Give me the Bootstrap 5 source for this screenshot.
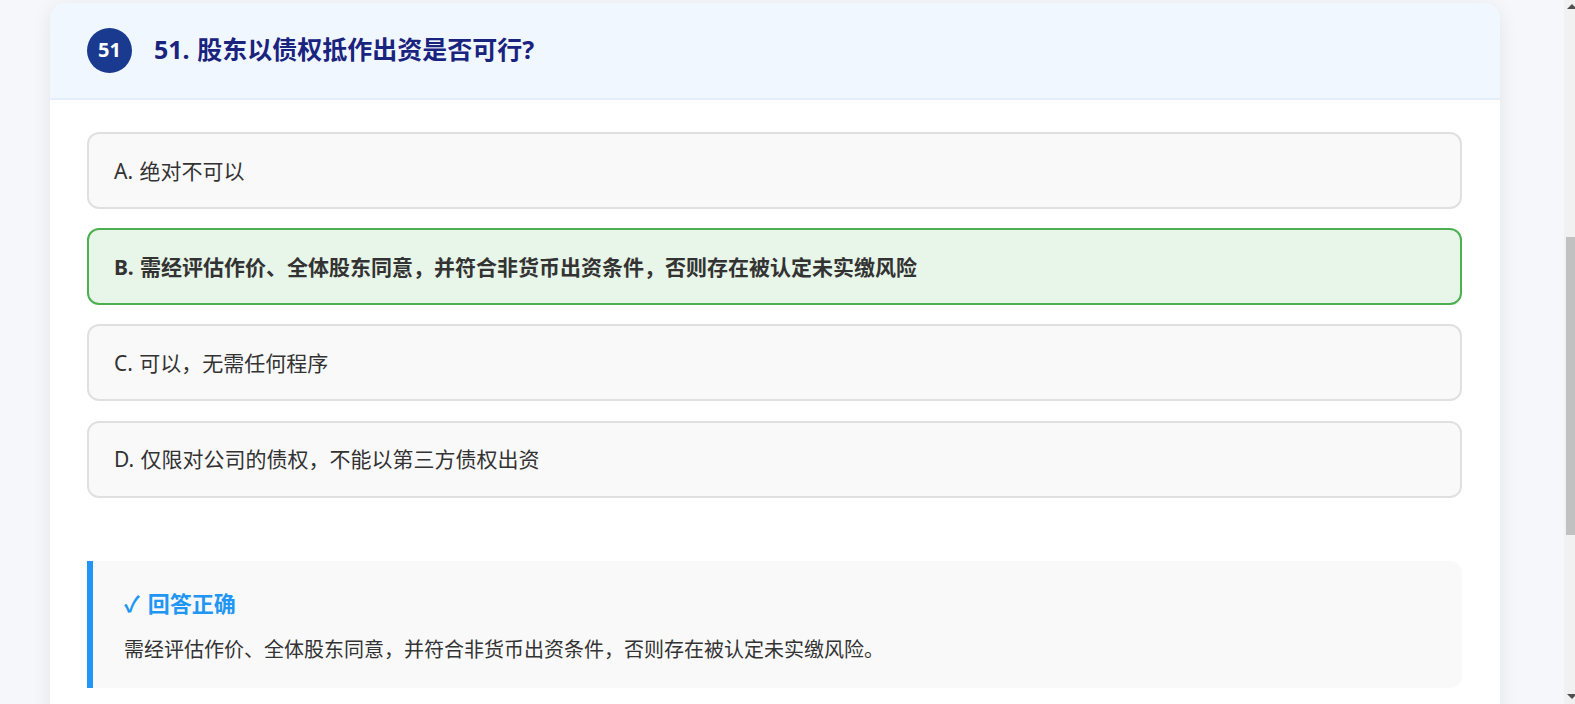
<!DOCTYPE html>
<html lang="zh-CN">
<head>
<meta charset="utf-8">
<title>题目 51</title>
<link href="https://cdn.jsdelivr.net/npm/bootstrap@5.3.0/dist/css/bootstrap.min.css" rel="stylesheet">
<style>
html,body{height:704px;overflow:hidden}
body{background:#f5f7fb;font-family:"Noto Sans","Noto Sans CJK SC",sans-serif;color:#333}
.page-frame{height:704px;overflow:hidden}
.page-main{width:1564px;padding:3px 64px 0 50px;flex:none}
.quiz-box{background:#fff;border-radius:16px 16px 0 0;box-shadow:0 4px 20px rgba(0,0,0,.08);overflow:hidden;height:760px}
.quiz-head{height:97px;background:#f0f7ff;border-bottom:2px solid #e3edfb;padding:0 38px 0 37px;gap:22px}
.num-dot{width:45px;height:45px;background:#1a3a8f;color:#fff;font-size:20px;font-weight:700;margin-top:-1px}
.quiz-title{font-size:25px;font-weight:700;color:#1a237e;line-height:1.2;margin:-4px 0 0;word-spacing:1px}
.quiz-body{padding:32px 38px 0 37px}
.opt-item{height:77px;background:#f9f9f9;border:2px solid #e0e0e0;border-radius:12px;padding:2px 26px 0 25px;font-size:21px;margin-bottom:19.2px;word-spacing:1px}
.opt-item.opt-right{background:#e8f5e9;border-color:#4caf50;font-weight:700}
.explain-box{margin-top:63.5px;height:127px;background:#f9f9f9;border-left:6px solid #2196f3;border-radius:0 12px 12px 0;padding:26px 30px 0 31px}
.explain-title{font-size:22px;font-weight:700;color:#2196f3;line-height:32px;margin-bottom:16px;word-spacing:2px}
.explain-text{font-size:20px;line-height:30px;color:#333}
.fake-scroll{width:11px;flex:none;background:#f1f1f1;height:704px;padding-left:2px}
.fake-up,.fake-down{height:17px;flex:none}
.fake-thumb{width:9px;height:298px;background:#c1c1c1;margin-top:220px}
.fake-down{margin-top:auto}
</style>
</head>
<body>
<div class="page-frame d-flex">
  <div class="page-main">
    <div class="quiz-box">
      <div class="quiz-head d-flex align-items-center">
        <div class="num-dot rounded-circle d-flex align-items-center justify-content-center flex-shrink-0">51</div>
        <h1 class="quiz-title">51. 股东以债权抵作出资是否可行?</h1>
      </div>
      <div class="quiz-body">
        <div class="opt-item d-flex align-items-center">A. 绝对不可以</div>
        <div class="opt-item opt-right d-flex align-items-center">B. 需经评估作价、全体股东同意&#65292;并符合非货币出资条件&#65292;否则存在被认定未实缴风险</div>
        <div class="opt-item d-flex align-items-center">C. 可以&#65292;无需任何程序</div>
        <div class="opt-item d-flex align-items-center">D. 仅限对公司的债权&#65292;不能以第三方债权出资</div>
        <div class="explain-box">
          <div class="explain-title">✓ 回答正确</div>
          <div class="explain-text">需经评估作价、全体股东同意&#65292;并符合非货币出资条件&#65292;否则存在被认定未实缴风险。</div>
        </div>
      </div>
    </div>
  </div>
  <div class="fake-scroll d-flex flex-column">
    <svg class="fake-up" width="9" height="17" viewBox="0 0 9 17"><path d="M1 9 L6 4 L9 7 V9 Z" fill="#505050"/></svg>
    <div class="fake-thumb"></div>
    <svg class="fake-down" width="9" height="17" viewBox="0 0 9 17"><path d="M1 7 L9 7 V9 L6 12 Z" fill="#505050"/></svg>
  </div>
</div>
</body>
</html>
